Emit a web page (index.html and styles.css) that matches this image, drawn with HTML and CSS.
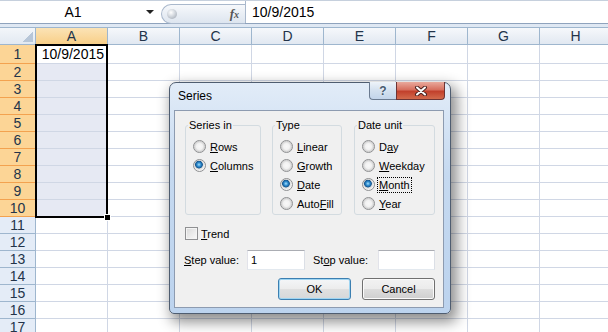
FILE: index.html
```html
<!DOCTYPE html>
<html lang="en">
<head>
  <meta charset="UTF-8" />
  <title>Series</title>
  <link rel="stylesheet" href="styles.css">
</head>
<body>
  <div class="formula-bar">
    <div class="name-box"><span class="name">A1</span><span class="caret"></span></div>
    <div class="fx-pill"><span class="knob"></span><span class="fx">f<small>x</small></span></div>
    <div class="formula-input">10/9/2015</div>
  </div>
  <div class="bar-gap"></div>

  <div class="sheet">
    <div class="corner"><span class="corner-mark"></span></div><div class="ch hl">A</div><div class="ch">B</div><div class="ch">C</div><div class="ch">D</div><div class="ch">E</div><div class="ch">F</div><div class="ch">G</div><div class="ch">H</div>
    <div class="rh hl">1</div><div class="c a1">10/9/2015</div><div class="c"></div><div class="c"></div><div class="c"></div><div class="c"></div><div class="c"></div><div class="c"></div><div class="c"></div>
    <div class="rh hl">2</div><div class="c sel"></div><div class="c"></div><div class="c"></div><div class="c"></div><div class="c"></div><div class="c"></div><div class="c"></div><div class="c"></div>
    <div class="rh hl">3</div><div class="c sel"></div><div class="c"></div><div class="c"></div><div class="c"></div><div class="c"></div><div class="c"></div><div class="c"></div><div class="c"></div>
    <div class="rh hl">4</div><div class="c sel"></div><div class="c"></div><div class="c"></div><div class="c"></div><div class="c"></div><div class="c"></div><div class="c"></div><div class="c"></div>
    <div class="rh hl">5</div><div class="c sel"></div><div class="c"></div><div class="c"></div><div class="c"></div><div class="c"></div><div class="c"></div><div class="c"></div><div class="c"></div>
    <div class="rh hl">6</div><div class="c sel"></div><div class="c"></div><div class="c"></div><div class="c"></div><div class="c"></div><div class="c"></div><div class="c"></div><div class="c"></div>
    <div class="rh hl">7</div><div class="c sel"></div><div class="c"></div><div class="c"></div><div class="c"></div><div class="c"></div><div class="c"></div><div class="c"></div><div class="c"></div>
    <div class="rh hl">8</div><div class="c sel"></div><div class="c"></div><div class="c"></div><div class="c"></div><div class="c"></div><div class="c"></div><div class="c"></div><div class="c"></div>
    <div class="rh hl">9</div><div class="c sel"></div><div class="c"></div><div class="c"></div><div class="c"></div><div class="c"></div><div class="c"></div><div class="c"></div><div class="c"></div>
    <div class="rh hl">10</div><div class="c sel"></div><div class="c"></div><div class="c"></div><div class="c"></div><div class="c"></div><div class="c"></div><div class="c"></div><div class="c"></div>
    <div class="rh">11</div><div class="c"></div><div class="c"></div><div class="c"></div><div class="c"></div><div class="c"></div><div class="c"></div><div class="c"></div><div class="c"></div>
    <div class="rh">12</div><div class="c"></div><div class="c"></div><div class="c"></div><div class="c"></div><div class="c"></div><div class="c"></div><div class="c"></div><div class="c"></div>
    <div class="rh">13</div><div class="c"></div><div class="c"></div><div class="c"></div><div class="c"></div><div class="c"></div><div class="c"></div><div class="c"></div><div class="c"></div>
    <div class="rh">14</div><div class="c"></div><div class="c"></div><div class="c"></div><div class="c"></div><div class="c"></div><div class="c"></div><div class="c"></div><div class="c"></div>
    <div class="rh">15</div><div class="c"></div><div class="c"></div><div class="c"></div><div class="c"></div><div class="c"></div><div class="c"></div><div class="c"></div><div class="c"></div>
    <div class="rh">16</div><div class="c"></div><div class="c"></div><div class="c"></div><div class="c"></div><div class="c"></div><div class="c"></div><div class="c"></div><div class="c"></div>
    <div class="rh">17</div><div class="c"></div><div class="c"></div><div class="c"></div><div class="c"></div><div class="c"></div><div class="c"></div><div class="c"></div><div class="c"></div>

    <span class="selection"><span class="fill-handle"></span></span>
  </div>

  <div class="dialog">
    <div class="titlebar">
      <span class="title">Series</span>
      <div class="caption-buttons">
        <span class="cap-btn help">?</span>
        <span class="cap-btn close">
          <svg width="14" height="10" viewBox="0 0 14 10">
            <path d="M3 1.5 L11 8.5 M11 1.5 L3 8.5" stroke="#4b2320" stroke-width="4" stroke-linecap="round"/>
            <path d="M3 1.5 L11 8.5 M11 1.5 L3 8.5" stroke="#fff" stroke-width="2" stroke-linecap="round"/>
          </svg>
        </span>
      </div>
    </div>

    <div class="client">
      <div class="groups">
        <fieldset class="group g-series">
          <legend>Series in</legend>
          <label class="opt"><span class="radio"></span><span><u>R</u>ows</span></label>
          <label class="opt"><span class="radio on"></span><span><u>C</u>olumns</span></label>
        </fieldset>
        <fieldset class="group g-type">
          <legend>Type</legend>
          <label class="opt"><span class="radio"></span><span><u>L</u>inear</span></label>
          <label class="opt"><span class="radio"></span><span><u>G</u>rowth</span></label>
          <label class="opt"><span class="radio on"></span><span><u>D</u>ate</span></label>
          <label class="opt"><span class="radio"></span><span>Auto<u>F</u>ill</span></label>
        </fieldset>
        <fieldset class="group g-unit">
          <legend>Date unit</legend>
          <label class="opt"><span class="radio"></span><span>D<u>a</u>y</span></label>
          <label class="opt"><span class="radio"></span><span><u>W</u>eekday</span></label>
          <label class="opt"><span class="radio on"></span><span class="focus"><u>M</u>onth</span></label>
          <label class="opt"><span class="radio"></span><span><u>Y</u>ear</span></label>
        </fieldset>
      </div>

      <label class="check-row"><span class="check"></span><span><u>T</u>rend</span></label>

      <div class="values">
        <span class="val-label step"><u>S</u>tep value:</span>
        <span class="field f-step">1</span>
        <span class="val-label stop">St<u>o</u>p value:</span>
        <span class="field f-stop"></span>
      </div>

      <div class="buttons">
        <button class="btn default">OK</button>
        <button class="btn">Cancel</button>
      </div>
    </div>
  </div>
</body>
</html>
```

FILE: styles.css
```css
body {
  margin: 0;
  width: 608px;
  height: 332px;
  overflow: hidden;
  position: relative;
  background: #fff;
  font-family: "Liberation Sans", Arial, sans-serif;
}

/* formula bar */
.formula-bar {
  display: flex;
  height: 22px;
  border-top: 1px solid #c6d0dd;
  border-bottom: 1px solid #8fa3bd;
  background: #fff;
  font-size: 14px;
  color: #000;
}
.name-box {
  width: 161px;
  display: flex;
  align-items: center;
}
.name { flex: 1; text-align: center; }
.caret {
  width: 0;
  height: 0;
  border-left: 4px solid transparent;
  border-right: 4px solid transparent;
  border-top: 4px solid #222;
  margin-right: 7px;
}
.fx-pill {
  width: 83px;
  height: 18px;
  margin-top: 3px;
  border: 1px solid #a9b8cc;
  border-right: none;
  border-radius: 10px 0 0 10px;
  background: linear-gradient(#f6f8fb, #dde5ef);
  display: flex;
  align-items: center;
  justify-content: space-between;
}
.knob {
  width: 10px;
  height: 10px;
  margin-left: 5px;
  border-radius: 50%;
  background: radial-gradient(circle at 40% 35%, #fff 0, #d6dbe1 40%, #98a1ac 100%);
}
.fx {
  font-family: "Liberation Serif", serif;
  font-style: italic;
  font-weight: bold;
  font-size: 13px;
  color: #555;
  margin-right: 6px;
}
.fx small { font-size: 10px; }
.formula-input {
  flex: 1;
  border-left: 1px solid #a9b8cc;
  padding-left: 6px;
  line-height: 22px;
}
.bar-gap {
  height: 3px;
  background: #dfe8f3;
  border-bottom: 1px solid #9eb6ce;
}

/* sheet */
.sheet {
  position: relative;
  display: grid;
  grid-template-columns: 36px repeat(8, 72px);
  grid-template-rows: 17px 19px repeat(16, 17px);
  font-size: 14px;
}
.sheet > div {
  box-sizing: border-box;
  border-right: 1px solid #d0d7e5;
  border-bottom: 1px solid #d0d7e5;
}
.sheet > .corner,
.sheet > .ch,
.sheet > .rh {
  border-color: #9eb6ce;
  color: #23344a;
  display: flex;
  align-items: center;
  justify-content: center;
}
.sheet > .corner {
  background: linear-gradient(#f3f6fa, #e2e9f2);
  align-items: flex-end;
  justify-content: flex-end;
  padding: 0 2px 2px 0;
}
.corner-mark {
  width: 10px;
  height: 10px;
  background: linear-gradient(135deg, transparent 50%, #b7c6d8 50%);
}
.sheet > .ch { background: linear-gradient(#f6f8fb, #e1e8f1); }
.sheet > .ch.hl {
  background: linear-gradient(#fbe3b6, #f8cf88);
  border-bottom-color: #f29436;
}
.sheet > .rh { background: #e4ecf7; }
.sheet > .rh.hl {
  background: #fcd596;
  border-bottom-color: #f3a24f;
  border-right-color: #f29436;
}
.sheet > .c.sel { background: #e6e9f3; }
.sheet > .a1 {
  text-align: right;
  padding-right: 3px;
  line-height: 19px;
}
.selection {
  position: absolute;
  left: 35px;
  top: 16px;
  width: 69px;
  height: 170px;
  border: 2px solid #000;
}
.fill-handle {
  position: absolute;
  right: -5px;
  bottom: -5px;
  width: 5px;
  height: 5px;
  background: #000;
  border: 1px solid #fff;
}

/* dialog */
.dialog {
  position: absolute;
  left: 169px;
  top: 82px;
  width: 271px;
  height: 226px;
  padding: 0 5px 4px 4px;
  border: 1px solid #4f5d70;
  border-radius: 7px 7px 5px 5px;
  background: linear-gradient(#e2ecf8, #c5d9f0 40%, #bcd3ee);
  box-shadow: 4px 6px 14px 2px rgba(0, 0, 0, 0.45);
  font-size: 11px;
  color: #000;
}
.titlebar {
  height: 27px;
  display: flex;
  justify-content: space-between;
  align-items: flex-start;
}
.title {
  font-size: 12px;
  margin: 6px 0 0 4px;
}
.caption-buttons {
  display: flex;
  margin-top: -1px;
}
.cap-btn {
  height: 17px;
  display: flex;
  align-items: center;
  justify-content: center;
  border: 1px solid #6a7a90;
  border-top: none;
}
.cap-btn.help {
  width: 26px;
  border-radius: 0 0 0 4px;
  border-right: none;
  background: linear-gradient(#eef3f9, #d3e0ef 50%, #c2d4ea);
  font-weight: bold;
  font-size: 12px;
  color: #475a70;
  text-shadow: 0 0 2px #fff;
}
.cap-btn.close {
  width: 47px;
  border-color: #6d3434;
  border-radius: 0 0 4px 0;
  background: linear-gradient(#e9a99c, #d7705f 45%, #c2402c 55%, #d26a4c);
}

.client {
  width: 250px;
  height: 189px;
  border: 1px solid #8d9bb0;
  background: #f0f0f0;
  padding: 7px 8px 0 10px;
}

.groups { display: flex; }
.group {
  margin: 0 11px 0 0;
  padding: 5px 0 1px 7px;
  min-inline-size: 0;
  border: 1px solid #d3dbe0;
  border-radius: 3px;
  box-sizing: border-box;
}
.group legend {
  padding: 0 1px;
  margin-left: -5px;
  line-height: 14px;
}
.g-series { width: 76px; }
.g-type { width: 70px; }
.g-unit { width: 81px; margin-right: 0; margin-left: 1px; }

.opt {
  display: flex;
  align-items: center;
  gap: 4px;
  height: 19px;
}
.radio {
  width: 11px;
  height: 11px;
  border: 1px solid #8f9092;
  border-radius: 50%;
  background: radial-gradient(circle, #f8f8f8 0, #f2f2f2 3px, #d4d4d4 5px, #ececec 6px);
}
.radio.on {
  background: radial-gradient(circle at 45% 42%, #a6e0fb 0, #2d8bcf 2px, #17578f 3.5px, #dcdcdc 4.2px, #f4f4f4 6px);
}
.focus {
  outline: 1px dotted #000;
  outline-offset: 1px;
}

.check-row {
  display: flex;
  align-items: center;
  gap: 3px;
  height: 13px;
  margin-top: 12px;
}
.check {
  width: 11px;
  height: 11px;
  border: 1px solid #8f9092;
  background: linear-gradient(135deg, #d9d9d9, #f9f9f9);
  box-shadow: inset 0 0 0 1px #f4f4f4;
}

.values {
  display: flex;
  align-items: center;
  height: 20px;
  margin-top: 10px;
}
.val-label.step { width: 63px; margin-left: -1px; }
.val-label.stop { width: 65px; margin-left: 8px; }
.field {
  box-sizing: border-box;
  height: 20px;
  line-height: 18px;
  padding-left: 3px;
  background: #fff;
  border: 1px solid #abadb3;
  border-left-color: #e2e3ea;
  border-right-color: #dbdfe6;
  border-bottom-color: #e3e9ef;
}
.f-step { width: 58px; }
.f-stop { width: 57px; }

.buttons {
  display: flex;
  justify-content: flex-end;
  gap: 11px;
  margin-top: 8px;
}
.btn {
  width: 73px;
  height: 22px;
  padding: 0;
  font-family: inherit;
  font-size: 11px;
  color: #000;
  border: 1px solid #707070;
  border-radius: 3px;
  background: linear-gradient(#f2f2f2, #ebebeb 50%, #dddddd 51%, #cfcfcf);
  box-shadow: inset 0 0 0 1px #fbfbfb;
}
.btn.default {
  border-color: #3c7fb1;
  box-shadow: inset 0 0 0 1px #9fd5f2;
  background: linear-gradient(#f4f6f8, #ececec 50%, #e0e0e0 51%, #d6d8da);
}
```
